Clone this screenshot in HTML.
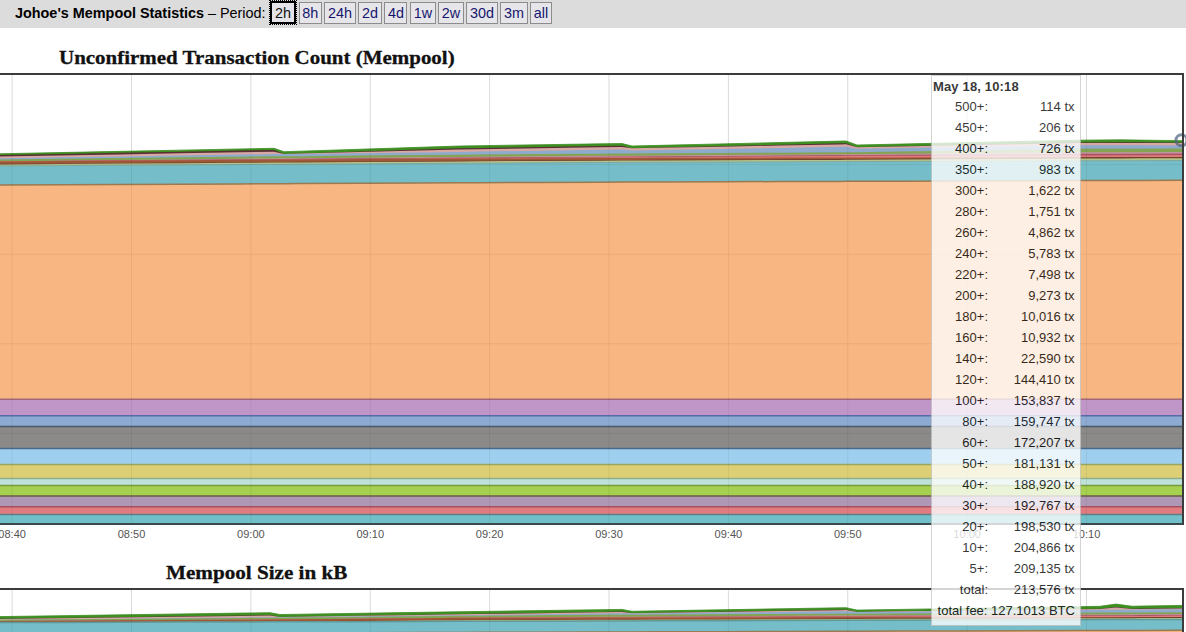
<!DOCTYPE html>
<html><head><meta charset="utf-8">
<style>
html,body{margin:0;padding:0;width:1186px;height:632px;overflow:hidden;background:#fff;}
body{position:relative;font-family:"Liberation Sans",sans-serif;}
#hdr{position:absolute;left:0;top:0;width:1186px;height:27.5px;background:#dcdcdc;}
#hdrtxt{position:absolute;left:15px;top:5px;font-size:14.4px;line-height:17px;color:#000;white-space:pre;}
#hdrtxt b{font-weight:bold;}
.b{position:absolute;top:2px;height:21.6px;box-sizing:border-box;border:1px solid #8c8c8c;background:#e6e6ea;color:#16166e;font-size:14.4px;line-height:20.6px;text-align:center;}
.b.sel{top:0.9px;height:23.2px;border:2px solid #000;outline:1.3px dotted #000;color:#111;line-height:20.6px;background:#e4e4e8;}
.title{position:absolute;font-family:"Liberation Serif",serif;font-weight:bold;color:#111;-webkit-text-stroke:0.3px #111;white-space:nowrap;transform-origin:0 0;}
svg{position:absolute;left:0;top:0;}
.xl{position:absolute;top:528px;width:40px;text-align:center;font-size:11px;line-height:13px;color:#545454;}
#tip{position:absolute;left:931px;top:75px;width:150px;height:550.5px;box-sizing:border-box;background:#fff;border:1px solid #c8c8c8;opacity:0.78;color:#000;font-size:13px;}
#tip .h{position:absolute;left:1px;top:3.3px;letter-spacing:0.15px;font-weight:bold;line-height:15px;white-space:nowrap;}
.tr{position:absolute;left:0;width:148px;height:15px;line-height:15px;white-space:nowrap;}
.tr .l{position:absolute;right:92px;}
.tr .v{position:absolute;right:5.5px;}
#fee{position:absolute;left:5.6px;letter-spacing:0px;top:526.8px;line-height:15px;white-space:nowrap;}
</style></head><body>
<div id="hdr"></div>
<div id="hdrtxt"><b>Johoe's Mempool Statistics</b> – Period: </div>
<div class="b sel" style="left:270px;width:26px">2h</div>
<div class="b" style="left:298.6px;width:23.2px">8h</div>
<div class="b" style="left:324.2px;width:31.6px">24h</div>
<div class="b" style="left:358.2px;width:23.4px">2d</div>
<div class="b" style="left:384.3px;width:23.2px">4d</div>
<div class="b" style="left:410.1px;width:25.7px">1w</div>
<div class="b" style="left:438.2px;width:25.6px">2w</div>
<div class="b" style="left:466.1px;width:31.7px">30d</div>
<div class="b" style="left:500.1px;width:27.7px">3m</div>
<div class="b" style="left:530.2px;width:21.6px">all</div>
<div class="title" id="t1" style="left:58.5px;top:46.6px;font-size:19px;line-height:22px;transform:scaleX(1.103);">Unconfirmed Transaction Count (Mempool)</div>
<div class="title" id="t2" style="left:165.5px;top:561.8px;font-size:19px;line-height:22px;transform:scaleX(1.112);">Mempool Size in kB</div>
<svg width="1186" height="632" viewBox="0 0 1186 632">
<defs><clipPath id="cp1"><rect x="-10" y="75" width="1192" height="448"/></clipPath>
<clipPath id="cp2"><rect x="-10" y="590" width="1192" height="60"/></clipPath></defs>
<g clip-path="url(#cp1)">
<polygon points="-4,153.8 0,153.78 60,152.57 120,151.37 180,150.17 240,148.96 274,148.28 284,151.72 300,151.2 360,149.25 420,147.3 460,146 480,145.68 540,144.74 600,143.85 622,143.55 632,146.02 660,145.36 720,143.94 780,142.53 840,141.11 846,140.97 857,145.03 900,144.09 960,142.78 1020,141.47 1080,140.16 1120,139.82 1140,140.1 1182,140.7 1182,530 1140,530 1120,530 1080,530 1020,530 960,530 900,530 857,530 846,530 840,530 780,530 720,530 660,530 632,530 622,530 600,530 540,530 480,530 460,530 420,530 360,530 300,530 284,530 274,530 240,530 180,530 120,530 60,530 0,530 -4,530" fill="#3e8e22"/>
<polygon points="-4,155.1 0,155.08 60,153.94 120,152.8 180,151.66 240,150.53 274,149.88 284,153.92 300,153.4 360,151.45 420,149.5 460,148.2 480,147.88 540,146.94 600,146.05 622,145.75 632,148.22 660,147.56 720,146.14 780,144.73 840,143.31 846,143.17 857,147.23 900,146.33 960,145.07 1020,143.81 1080,142.56 1120,142.22 1140,142.37 1182,142.7 1182,530 1140,530 1120,530 1080,530 1020,530 960,530 900,530 857,530 846,530 840,530 780,530 720,530 660,530 632,530 622,530 600,530 540,530 480,530 460,530 420,530 360,530 300,530 284,530 274,530 240,530 180,530 120,530 60,530 0,530 -4,530" fill="#5a3034"/>
<polygon points="-4,156.6 0,156.58 60,155.5 120,154.43 180,153.36 240,152.29 274,151.68 284,153.92 300,153.52 360,152.01 420,150.5 460,149.5 480,149.17 540,148.19 600,147.26 622,146.95 632,148.22 660,147.72 720,146.64 780,145.56 840,144.48 846,144.37 857,147.23 900,146.43 960,145.3 1020,144.18 1080,143.06 1120,142.92 1140,142.98 1182,143.1 1182,530 1140,530 1120,530 1080,530 1020,530 960,530 900,530 857,530 846,530 840,530 780,530 720,530 660,530 632,530 622,530 600,530 540,530 480,530 460,530 420,530 360,530 300,530 284,530 274,530 240,530 180,530 120,530 60,530 0,530 -4,530" fill="#d8a8a4"/>
<polygon points="-4,158.2 0,158.18 60,157.28 120,156.38 180,155.49 240,154.59 274,154.08 284,154.12 300,153.92 360,153.16 420,152.4 460,151.9 480,151.58 540,150.64 600,149.75 622,149.45 632,150.42 660,149.94 720,148.92 780,147.9 840,146.87 846,146.77 857,148.63 900,148 960,147.12 1020,146.24 1080,145.36 1120,145.22 1140,145.28 1182,145.4 1182,530 1140,530 1120,530 1080,530 1020,530 960,530 900,530 857,530 846,530 840,530 780,530 720,530 660,530 632,530 622,530 600,530 540,530 480,530 460,530 420,530 360,530 300,530 284,530 274,530 240,530 180,530 120,530 60,530 0,530 -4,530" fill="#8eaacc"/>
<polygon points="-4,159.4 0,159.38 60,158.7 120,158.02 180,157.34 240,156.67 274,156.28 284,156.32 300,156.18 360,155.62 420,155.07 460,154.7 480,154.55 540,154.08 600,153.67 622,153.55 632,153.52 660,153.36 720,153.01 780,152.66 840,152.31 846,152.27 857,152.23 900,151.58 960,150.67 1020,149.76 1080,148.86 1120,148.72 1140,148.65 1182,148.5 1182,530 1140,530 1120,530 1080,530 1020,530 960,530 900,530 857,530 846,530 840,530 780,530 720,530 660,530 632,530 622,530 600,530 540,530 480,530 460,530 420,530 360,530 300,530 284,530 274,530 240,530 180,530 120,530 60,530 0,530 -4,530" fill="#84a452"/>
<polygon points="-4,161.4 0,161.38 60,160.72 120,160.06 180,159.41 240,158.75 274,158.38 284,158.32 300,158.19 360,157.71 420,157.22 460,156.9 480,156.75 540,156.28 600,155.87 622,155.75 632,155.72 660,155.53 720,155.12 780,154.72 840,154.31 846,154.27 857,154.23 900,153.87 960,153.37 1020,152.86 1080,152.36 1120,152.22 1140,152.15 1182,152 1182,530 1140,530 1120,530 1080,530 1020,530 960,530 900,530 857,530 846,530 840,530 780,530 720,530 660,530 632,530 622,530 600,530 540,530 480,530 460,530 420,530 360,530 300,530 284,530 274,530 240,530 180,530 120,530 60,530 0,530 -4,530" fill="#c494a4"/>
<polygon points="-4,161.4 0,161.38 60,160.85 120,160.33 180,159.8 240,159.28 274,158.98 284,158.92 300,158.8 360,158.35 420,157.9 460,157.6 480,157.46 540,157.03 600,156.66 622,156.55 632,156.52 660,156.33 720,155.92 780,155.52 840,155.11 846,155.07 857,155.03 900,154.81 960,154.49 1020,154.17 1080,153.86 1120,153.72 1140,153.65 1182,153.5 1182,530 1140,530 1120,530 1080,530 1020,530 960,530 900,530 857,530 846,530 840,530 780,530 720,530 660,530 632,530 622,530 600,530 540,530 480,530 460,530 420,530 360,530 300,530 284,530 274,530 240,530 180,530 120,530 60,530 0,530 -4,530" fill="#a85464"/>
<polygon points="-4,161.4 0,161.38 60,160.98 120,160.59 180,160.2 240,159.8 274,159.58 284,159.52 300,159.41 360,158.99 420,158.58 460,158.3 480,158.17 540,157.78 600,157.44 622,157.35 632,157.32 660,157.13 720,156.72 780,156.32 840,155.91 846,155.87 857,155.83 900,155.76 960,155.66 1020,155.56 1080,155.46 1120,155.32 1140,155.25 1182,155.1 1182,530 1140,530 1120,530 1080,530 1020,530 960,530 900,530 857,530 846,530 840,530 780,530 720,530 660,530 632,530 622,530 600,530 540,530 480,530 460,530 420,530 360,530 300,530 284,530 274,530 240,530 180,530 120,530 60,530 0,530 -4,530" fill="#e07a78"/>
<polygon points="-4,161.4 0,161.38 60,160.98 120,160.59 180,160.2 240,159.8 274,159.58 284,159.52 300,159.44 360,159.12 420,158.81 460,158.6 480,158.51 540,158.23 600,158 622,157.95 632,157.92 660,157.86 720,157.73 780,157.61 840,157.48 846,157.47 857,157.43 900,157.4 960,157.35 1020,157.3 1080,157.26 1120,157.12 1140,157.05 1182,156.9 1182,530 1140,530 1120,530 1080,530 1020,530 960,530 900,530 857,530 846,530 840,530 780,530 720,530 660,530 632,530 622,530 600,530 540,530 480,530 460,530 420,530 360,530 300,530 284,530 274,530 240,530 180,530 120,530 60,530 0,530 -4,530" fill="#9e5838"/>
<polygon points="-4,163.8 0,163.78 60,163.38 120,162.99 180,162.6 240,162.2 274,161.98 284,161.92 300,161.82 360,161.44 420,161.05 460,160.8 480,160.68 540,160.33 600,160.03 622,159.95 632,159.92 660,159.81 720,159.57 780,159.33 840,159.1 846,159.07 857,159.03 900,158.69 960,158.21 1020,157.73 1080,157.26 1120,157.12 1140,157.05 1182,156.9 1182,530 1140,530 1120,530 1080,530 1020,530 960,530 900,530 857,530 846,530 840,530 780,530 720,530 660,530 632,530 622,530 600,530 540,530 480,530 460,530 420,530 360,530 300,530 284,530 274,530 240,530 180,530 120,530 60,530 0,530 -4,530" fill="#704030"/>
<polygon points="-4,164.4 0,164.38 60,163.98 120,163.59 180,163.2 240,162.8 274,162.58 284,162.52 300,162.42 360,162.04 420,161.65 460,161.4 480,161.28 540,160.93 600,160.63 622,160.55 632,160.52 660,160.43 720,160.25 780,160.07 840,159.89 846,159.87 857,159.83 900,159.59 960,159.24 1020,158.9 1080,158.56 1120,158.42 1140,158.35 1182,158.2 1182,530 1140,530 1120,530 1080,530 1020,530 960,530 900,530 857,530 846,530 840,530 780,530 720,530 660,530 632,530 622,530 600,530 540,530 480,530 460,530 420,530 360,530 300,530 284,530 274,530 240,530 180,530 120,530 60,530 0,530 -4,530" fill="#b4c488"/>
<polygon points="-4,166 0,165.98 60,165.63 120,165.28 180,164.93 240,164.58 274,164.38 284,164.32 300,164.23 360,163.88 420,163.53 460,163.3 480,163.18 540,162.83 600,162.53 622,162.45 632,162.42 660,162.32 720,162.11 780,161.9 840,161.69 846,161.67 857,161.63 900,161.48 960,161.27 1020,161.07 1080,160.86 1120,160.72 1140,160.65 1182,160.5 1182,530 1140,530 1120,530 1080,530 1020,530 960,530 900,530 857,530 846,530 840,530 780,530 720,530 660,530 632,530 622,530 600,530 540,530 480,530 460,530 420,530 360,530 300,530 284,530 274,530 240,530 180,530 120,530 60,530 0,530 -4,530" fill="#74bdc9"/>
<polygon points="-4,185.1 0,185.08 60,184.78 120,184.48 180,184.19 240,183.89 274,183.72 284,183.67 300,183.59 360,183.29 420,182.99 460,182.8 480,182.7 540,182.4 600,182.14 622,182.07 632,182.04 660,181.95 720,181.76 780,181.57 840,181.38 846,181.36 857,181.33 900,181.19 960,181 1020,180.81 1080,180.62 1120,180.5 1140,180.43 1182,180.3 1182,530 1140,530 1120,530 1080,530 1020,530 960,530 900,530 857,530 846,530 840,530 780,530 720,530 660,530 632,530 622,530 600,530 540,530 480,530 460,530 420,530 360,530 300,530 284,530 274,530 240,530 180,530 120,530 60,530 0,530 -4,530" fill="#f8b682"/>
<polygon points="-4,399.3 0,399.3 60,399.3 120,399.3 180,399.3 240,399.3 274,399.3 284,399.3 300,399.3 360,399.3 420,399.3 460,399.3 480,399.3 540,399.3 600,399.3 622,399.3 632,399.3 660,399.3 720,399.3 780,399.3 840,399.3 846,399.3 857,399.3 900,399.3 960,399.3 1020,399.3 1080,399.3 1120,399.3 1140,399.3 1182,399.3 1182,530 1140,530 1120,530 1080,530 1020,530 960,530 900,530 857,530 846,530 840,530 780,530 720,530 660,530 632,530 622,530 600,530 540,530 480,530 460,530 420,530 360,530 300,530 284,530 274,530 240,530 180,530 120,530 60,530 0,530 -4,530" fill="#c096c8"/>
<polygon points="-4,415.8 0,415.8 60,415.8 120,415.8 180,415.8 240,415.8 274,415.8 284,415.8 300,415.8 360,415.8 420,415.8 460,415.8 480,415.8 540,415.8 600,415.8 622,415.8 632,415.8 660,415.8 720,415.8 780,415.8 840,415.8 846,415.8 857,415.8 900,415.8 960,415.8 1020,415.8 1080,415.8 1120,415.8 1140,415.8 1182,415.8 1182,530 1140,530 1120,530 1080,530 1020,530 960,530 900,530 857,530 846,530 840,530 780,530 720,530 660,530 632,530 622,530 600,530 540,530 480,530 460,530 420,530 360,530 300,530 284,530 274,530 240,530 180,530 120,530 60,530 0,530 -4,530" fill="#8caad2"/>
<polygon points="-4,426.6 0,426.6 60,426.6 120,426.6 180,426.6 240,426.6 274,426.6 284,426.6 300,426.6 360,426.6 420,426.6 460,426.6 480,426.6 540,426.6 600,426.6 622,426.6 632,426.6 660,426.6 720,426.6 780,426.6 840,426.6 846,426.6 857,426.6 900,426.6 960,426.6 1020,426.6 1080,426.6 1120,426.6 1140,426.6 1182,426.6 1182,530 1140,530 1120,530 1080,530 1020,530 960,530 900,530 857,530 846,530 840,530 780,530 720,530 660,530 632,530 622,530 600,530 540,530 480,530 460,530 420,530 360,530 300,530 284,530 274,530 240,530 180,530 120,530 60,530 0,530 -4,530" fill="#8b8a89"/>
<polygon points="-4,448.6 0,448.6 60,448.6 120,448.6 180,448.6 240,448.6 274,448.6 284,448.6 300,448.6 360,448.6 420,448.6 460,448.6 480,448.6 540,448.6 600,448.6 622,448.6 632,448.6 660,448.6 720,448.6 780,448.6 840,448.6 846,448.6 857,448.6 900,448.6 960,448.6 1020,448.6 1080,448.6 1120,448.6 1140,448.6 1182,448.6 1182,530 1140,530 1120,530 1080,530 1020,530 960,530 900,530 857,530 846,530 840,530 780,530 720,530 660,530 632,530 622,530 600,530 540,530 480,530 460,530 420,530 360,530 300,530 284,530 274,530 240,530 180,530 120,530 60,530 0,530 -4,530" fill="#9ecfee"/>
<polygon points="-4,464.4 0,464.4 60,464.4 120,464.4 180,464.4 240,464.4 274,464.4 284,464.4 300,464.4 360,464.4 420,464.4 460,464.4 480,464.4 540,464.4 600,464.4 622,464.4 632,464.4 660,464.4 720,464.4 780,464.4 840,464.4 846,464.4 857,464.4 900,464.4 960,464.4 1020,464.4 1080,464.4 1120,464.4 1140,464.4 1182,464.4 1182,530 1140,530 1120,530 1080,530 1020,530 960,530 900,530 857,530 846,530 840,530 780,530 720,530 660,530 632,530 622,530 600,530 540,530 480,530 460,530 420,530 360,530 300,530 284,530 274,530 240,530 180,530 120,530 60,530 0,530 -4,530" fill="#dccf76"/>
<polygon points="-4,478.5 0,478.5 60,478.5 120,478.5 180,478.5 240,478.5 274,478.5 284,478.5 300,478.5 360,478.5 420,478.5 460,478.5 480,478.5 540,478.5 600,478.5 622,478.5 632,478.5 660,478.5 720,478.5 780,478.5 840,478.5 846,478.5 857,478.5 900,478.5 960,478.5 1020,478.5 1080,478.5 1120,478.5 1140,478.5 1182,478.5 1182,530 1140,530 1120,530 1080,530 1020,530 960,530 900,530 857,530 846,530 840,530 780,530 720,530 660,530 632,530 622,530 600,530 540,530 480,530 460,530 420,530 360,530 300,530 284,530 274,530 240,530 180,530 120,530 60,530 0,530 -4,530" fill="#bee2da"/>
<polygon points="-4,485.6 0,485.6 60,485.6 120,485.6 180,485.6 240,485.6 274,485.6 284,485.6 300,485.6 360,485.6 420,485.6 460,485.6 480,485.6 540,485.6 600,485.6 622,485.6 632,485.6 660,485.6 720,485.6 780,485.6 840,485.6 846,485.6 857,485.6 900,485.6 960,485.6 1020,485.6 1080,485.6 1120,485.6 1140,485.6 1182,485.6 1182,530 1140,530 1120,530 1080,530 1020,530 960,530 900,530 857,530 846,530 840,530 780,530 720,530 660,530 632,530 622,530 600,530 540,530 480,530 460,530 420,530 360,530 300,530 284,530 274,530 240,530 180,530 120,530 60,530 0,530 -4,530" fill="#a6d050"/>
<polygon points="-4,495.9 0,495.9 60,495.9 120,495.9 180,495.9 240,495.9 274,495.9 284,495.9 300,495.9 360,495.9 420,495.9 460,495.9 480,495.9 540,495.9 600,495.9 622,495.9 632,495.9 660,495.9 720,495.9 780,495.9 840,495.9 846,495.9 857,495.9 900,495.9 960,495.9 1020,495.9 1080,495.9 1120,495.9 1140,495.9 1182,495.9 1182,530 1140,530 1120,530 1080,530 1020,530 960,530 900,530 857,530 846,530 840,530 780,530 720,530 660,530 632,530 622,530 600,530 540,530 480,530 460,530 420,530 360,530 300,530 284,530 274,530 240,530 180,530 120,530 60,530 0,530 -4,530" fill="#ae98b6"/>
<polygon points="-4,506.8 0,506.8 60,506.8 120,506.8 180,506.8 240,506.8 274,506.8 284,506.8 300,506.8 360,506.8 420,506.8 460,506.8 480,506.8 540,506.8 600,506.8 622,506.8 632,506.8 660,506.8 720,506.8 780,506.8 840,506.8 846,506.8 857,506.8 900,506.8 960,506.8 1020,506.8 1080,506.8 1120,506.8 1140,506.8 1182,506.8 1182,530 1140,530 1120,530 1080,530 1020,530 960,530 900,530 857,530 846,530 840,530 780,530 720,530 660,530 632,530 622,530 600,530 540,530 480,530 460,530 420,530 360,530 300,530 284,530 274,530 240,530 180,530 120,530 60,530 0,530 -4,530" fill="#e07c80"/>
<polygon points="-4,514.6 0,514.6 60,514.6 120,514.6 180,514.6 240,514.6 274,514.6 284,514.6 300,514.6 360,514.6 420,514.6 460,514.6 480,514.6 540,514.6 600,514.6 622,514.6 632,514.6 660,514.6 720,514.6 780,514.6 840,514.6 846,514.6 857,514.6 900,514.6 960,514.6 1020,514.6 1080,514.6 1120,514.6 1140,514.6 1182,514.6 1182,530 1140,530 1120,530 1080,530 1020,530 960,530 900,530 857,530 846,530 840,530 780,530 720,530 660,530 632,530 622,530 600,530 540,530 480,530 460,530 420,530 360,530 300,530 284,530 274,530 240,530 180,530 120,530 60,530 0,530 -4,530" fill="#70bfc9"/>
<polyline points="-4,514.6 0,514.6 60,514.6 120,514.6 180,514.6 240,514.6 274,514.6 284,514.6 300,514.6 360,514.6 420,514.6 460,514.6 480,514.6 540,514.6 600,514.6 622,514.6 632,514.6 660,514.6 720,514.6 780,514.6 840,514.6 846,514.6 857,514.6 900,514.6 960,514.6 1020,514.6 1080,514.6 1120,514.6 1140,514.6 1182,514.6" fill="none" stroke="#5e7f88" stroke-width="1.5"/>
<polyline points="-4,506.8 0,506.8 60,506.8 120,506.8 180,506.8 240,506.8 274,506.8 284,506.8 300,506.8 360,506.8 420,506.8 460,506.8 480,506.8 540,506.8 600,506.8 622,506.8 632,506.8 660,506.8 720,506.8 780,506.8 840,506.8 846,506.8 857,506.8 900,506.8 960,506.8 1020,506.8 1080,506.8 1120,506.8 1140,506.8 1182,506.8" fill="none" stroke="#a65060" stroke-width="1.5"/>
<polyline points="-4,495.9 0,495.9 60,495.9 120,495.9 180,495.9 240,495.9 274,495.9 284,495.9 300,495.9 360,495.9 420,495.9 460,495.9 480,495.9 540,495.9 600,495.9 622,495.9 632,495.9 660,495.9 720,495.9 780,495.9 840,495.9 846,495.9 857,495.9 900,495.9 960,495.9 1020,495.9 1080,495.9 1120,495.9 1140,495.9 1182,495.9" fill="none" stroke="#6a5a48" stroke-width="1.5"/>
<polyline points="-4,485.6 0,485.6 60,485.6 120,485.6 180,485.6 240,485.6 274,485.6 284,485.6 300,485.6 360,485.6 420,485.6 460,485.6 480,485.6 540,485.6 600,485.6 622,485.6 632,485.6 660,485.6 720,485.6 780,485.6 840,485.6 846,485.6 857,485.6 900,485.6 960,485.6 1020,485.6 1080,485.6 1120,485.6 1140,485.6 1182,485.6" fill="none" stroke="#7a9a40" stroke-width="1.5"/>
<polyline points="-4,478.5 0,478.5 60,478.5 120,478.5 180,478.5 240,478.5 274,478.5 284,478.5 300,478.5 360,478.5 420,478.5 460,478.5 480,478.5 540,478.5 600,478.5 622,478.5 632,478.5 660,478.5 720,478.5 780,478.5 840,478.5 846,478.5 857,478.5 900,478.5 960,478.5 1020,478.5 1080,478.5 1120,478.5 1140,478.5 1182,478.5" fill="none" stroke="#8eae8a" stroke-width="1.5"/>
<polyline points="-4,464.4 0,464.4 60,464.4 120,464.4 180,464.4 240,464.4 274,464.4 284,464.4 300,464.4 360,464.4 420,464.4 460,464.4 480,464.4 540,464.4 600,464.4 622,464.4 632,464.4 660,464.4 720,464.4 780,464.4 840,464.4 846,464.4 857,464.4 900,464.4 960,464.4 1020,464.4 1080,464.4 1120,464.4 1140,464.4 1182,464.4" fill="none" stroke="#9aa660" stroke-width="1.5"/>
<polyline points="-4,448.6 0,448.6 60,448.6 120,448.6 180,448.6 240,448.6 274,448.6 284,448.6 300,448.6 360,448.6 420,448.6 460,448.6 480,448.6 540,448.6 600,448.6 622,448.6 632,448.6 660,448.6 720,448.6 780,448.6 840,448.6 846,448.6 857,448.6 900,448.6 960,448.6 1020,448.6 1080,448.6 1120,448.6 1140,448.6 1182,448.6" fill="none" stroke="#4a6a8a" stroke-width="1.5"/>
<polyline points="-4,426.6 0,426.6 60,426.6 120,426.6 180,426.6 240,426.6 274,426.6 284,426.6 300,426.6 360,426.6 420,426.6 460,426.6 480,426.6 540,426.6 600,426.6 622,426.6 632,426.6 660,426.6 720,426.6 780,426.6 840,426.6 846,426.6 857,426.6 900,426.6 960,426.6 1020,426.6 1080,426.6 1120,426.6 1140,426.6 1182,426.6" fill="none" stroke="#4a5a6a" stroke-width="1.5"/>
<polyline points="-4,415.8 0,415.8 60,415.8 120,415.8 180,415.8 240,415.8 274,415.8 284,415.8 300,415.8 360,415.8 420,415.8 460,415.8 480,415.8 540,415.8 600,415.8 622,415.8 632,415.8 660,415.8 720,415.8 780,415.8 840,415.8 846,415.8 857,415.8 900,415.8 960,415.8 1020,415.8 1080,415.8 1120,415.8 1140,415.8 1182,415.8" fill="none" stroke="#5a6aa8" stroke-width="1.5"/>
<polyline points="-4,399.3 0,399.3 60,399.3 120,399.3 180,399.3 240,399.3 274,399.3 284,399.3 300,399.3 360,399.3 420,399.3 460,399.3 480,399.3 540,399.3 600,399.3 622,399.3 632,399.3 660,399.3 720,399.3 780,399.3 840,399.3 846,399.3 857,399.3 900,399.3 960,399.3 1020,399.3 1080,399.3 1120,399.3 1140,399.3 1182,399.3" fill="none" stroke="#a06878" stroke-width="1.5"/>
<polyline points="-4,185.1 0,185.08 60,184.78 120,184.48 180,184.19 240,183.89 274,183.72 284,183.67 300,183.59 360,183.29 420,182.99 460,182.8 480,182.7 540,182.4 600,182.14 622,182.07 632,182.04 660,181.95 720,181.76 780,181.57 840,181.38 846,181.36 857,181.33 900,181.19 960,181 1020,180.81 1080,180.62 1120,180.5 1140,180.43 1182,180.3" fill="none" stroke="#9a7a50" stroke-width="1.5"/>
<polyline points="-4,166 0,165.98 60,165.63 120,165.28 180,164.93 240,164.58 274,164.38 284,164.32 300,164.23 360,163.88 420,163.53 460,163.3 480,163.18 540,162.83 600,162.53 622,162.45 632,162.42 660,162.32 720,162.11 780,161.9 840,161.69 846,161.67 857,161.63 900,161.48 960,161.27 1020,161.07 1080,160.86 1120,160.72 1140,160.65 1182,160.5" fill="none" stroke="#80a8a0" stroke-width="1.0"/>
<polyline points="-4,153.8 0,153.78 60,152.57 120,151.37 180,150.17 240,148.96 274,148.28 284,151.72 300,151.2 360,149.25 420,147.3 460,146 480,145.68 540,144.74 600,143.85 622,143.55 632,146.02 660,145.36 720,143.94 780,142.53 840,141.11 846,140.97 857,145.03 900,144.09 960,142.78 1020,141.47 1080,140.16 1120,139.82 1140,140.1 1182,140.7" fill="none" stroke="#3e8e22" stroke-width="0.8"/>
<line x1="12.12" y1="75" x2="12.12" y2="153.53" stroke="rgba(0,0,0,0.15)" stroke-width="1"/>
<line x1="12.12" y1="153.53" x2="12.12" y2="523" stroke="rgba(0,0,0,0.06)" stroke-width="1"/>
<line x1="131.5" y1="75" x2="131.5" y2="151.14" stroke="rgba(0,0,0,0.15)" stroke-width="1"/>
<line x1="131.5" y1="151.14" x2="131.5" y2="523" stroke="rgba(0,0,0,0.06)" stroke-width="1"/>
<line x1="250.88" y1="75" x2="250.88" y2="148.75" stroke="rgba(0,0,0,0.15)" stroke-width="1"/>
<line x1="250.88" y1="148.75" x2="250.88" y2="523" stroke="rgba(0,0,0,0.06)" stroke-width="1"/>
<line x1="370.25" y1="75" x2="370.25" y2="148.92" stroke="rgba(0,0,0,0.15)" stroke-width="1"/>
<line x1="370.25" y1="148.92" x2="370.25" y2="523" stroke="rgba(0,0,0,0.06)" stroke-width="1"/>
<line x1="489.62" y1="75" x2="489.62" y2="145.53" stroke="rgba(0,0,0,0.15)" stroke-width="1"/>
<line x1="489.62" y1="145.53" x2="489.62" y2="523" stroke="rgba(0,0,0,0.06)" stroke-width="1"/>
<line x1="609" y1="75" x2="609" y2="143.73" stroke="rgba(0,0,0,0.15)" stroke-width="1"/>
<line x1="609" y1="143.73" x2="609" y2="523" stroke="rgba(0,0,0,0.06)" stroke-width="1"/>
<line x1="728.38" y1="75" x2="728.38" y2="143.75" stroke="rgba(0,0,0,0.15)" stroke-width="1"/>
<line x1="728.38" y1="143.75" x2="728.38" y2="523" stroke="rgba(0,0,0,0.06)" stroke-width="1"/>
<line x1="847.75" y1="75" x2="847.75" y2="141.62" stroke="rgba(0,0,0,0.15)" stroke-width="1"/>
<line x1="847.75" y1="141.62" x2="847.75" y2="523" stroke="rgba(0,0,0,0.06)" stroke-width="1"/>
<line x1="967.12" y1="75" x2="967.12" y2="142.62" stroke="rgba(0,0,0,0.15)" stroke-width="1"/>
<line x1="967.12" y1="142.62" x2="967.12" y2="523" stroke="rgba(0,0,0,0.06)" stroke-width="1"/>
<line x1="1086.5" y1="75" x2="1086.5" y2="140.1" stroke="rgba(0,0,0,0.15)" stroke-width="1"/>
<line x1="1086.5" y1="140.1" x2="1086.5" y2="523" stroke="rgba(0,0,0,0.06)" stroke-width="1"/>
<line x1="-10" y1="164.6" x2="1182" y2="164.6" stroke="rgba(0,0,0,0.06)" stroke-width="1"/>
<line x1="-10" y1="254.2" x2="1182" y2="254.2" stroke="rgba(0,0,0,0.06)" stroke-width="1"/>
<line x1="-10" y1="343.8" x2="1182" y2="343.8" stroke="rgba(0,0,0,0.06)" stroke-width="1"/>
<line x1="-10" y1="433.4" x2="1182" y2="433.4" stroke="rgba(0,0,0,0.06)" stroke-width="1"/>
</g>
<circle cx="1181.5" cy="140.3" r="5.5" fill="none" stroke="rgba(80,100,130,0.72)" stroke-width="3"/>
<rect x="-10" y="74" width="1193" height="450" fill="none" stroke="#3c3c3c" stroke-width="2"/>
<line x1="-10" y1="524" x2="1183" y2="524" stroke="#3a4a4a" stroke-width="2"/>
<g clip-path="url(#cp2)">
<polygon points="-4,616.6 0,616.6 60,615.73 120,614.85 180,613.98 240,613.11 270,612.67 280,614.54 300,614.23 360,613.3 420,612.37 460,611.75 480,611.47 540,610.6 600,609.73 622,609.42 632,611.29 660,610.82 720,609.82 780,608.81 840,607.81 846,607.71 857,610.08 900,609.41 960,608.49 1020,607.56 1080,606.63 1100,606.32 1116,604.08 1132,606.24 1140,606.1 1182,605.4 1182,640 1140,640 1132,640 1116,640 1100,640 1080,640 1020,640 960,640 900,640 857,640 846,640 840,640 780,640 720,640 660,640 632,640 622,640 600,640 540,640 480,640 460,640 420,640 360,640 300,640 280,640 270,640 240,640 180,640 120,640 60,640 0,640 -4,640" fill="#3e8e22"/>
<polygon points="-4,618.8 0,618.8 60,617.97 120,617.14 180,616.31 240,615.48 270,615.07 280,616.94 300,616.63 360,615.7 420,614.77 460,614.15 480,613.84 540,612.9 600,611.96 622,611.62 632,613.29 660,612.82 720,611.82 780,610.81 840,609.81 846,609.71 857,611.88 900,611.32 960,610.54 1020,609.76 1080,608.98 1100,608.72 1116,606.88 1132,608.64 1140,608.58 1182,608.3 1182,640 1140,640 1132,640 1116,640 1100,640 1080,640 1020,640 960,640 900,640 857,640 846,640 840,640 780,640 720,640 660,640 632,640 622,640 600,640 540,640 480,640 460,640 420,640 360,640 300,640 280,640 270,640 240,640 180,640 120,640 60,640 0,640 -4,640" fill="#5a3034"/>
<polygon points="-4,619 0,619 60,618.24 120,617.48 180,616.71 240,615.95 270,615.57 280,616.94 300,616.65 360,615.79 420,614.93 460,614.35 480,614.07 540,613.2 600,612.33 622,612.02 632,613.29 660,612.87 720,611.98 780,611.09 840,610.2 846,610.11 857,611.88 900,611.37 960,610.67 1020,609.96 1080,609.26 1100,609.02 1116,607.48 1132,608.94 1140,608.88 1182,608.6 1182,640 1140,640 1132,640 1116,640 1100,640 1080,640 1020,640 960,640 900,640 857,640 846,640 840,640 780,640 720,640 660,640 632,640 622,640 600,640 540,640 480,640 460,640 420,640 360,640 300,640 280,640 270,640 240,640 180,640 120,640 60,640 0,640 -4,640" fill="#d8a8a4"/>
<polygon points="-4,619.8 0,619.8 60,619.22 120,618.63 180,618.05 240,617.46 270,617.17 280,617.14 300,616.94 360,616.35 420,615.75 460,615.35 480,615.09 540,614.3 600,613.51 622,613.22 632,613.49 660,613.2 720,612.59 780,611.98 840,611.37 846,611.31 857,612.08 900,611.66 960,611.08 1020,610.5 1080,609.92 1100,609.72 1116,609.68 1132,609.64 1140,609.58 1182,609.3 1182,640 1140,640 1132,640 1116,640 1100,640 1080,640 1020,640 960,640 900,640 857,640 846,640 840,640 780,640 720,640 660,640 632,640 622,640 600,640 540,640 480,640 460,640 420,640 360,640 300,640 280,640 270,640 240,640 180,640 120,640 60,640 0,640 -4,640" fill="#8eaacc"/>
<polygon points="-4,619.8 0,619.8 60,619.35 120,618.9 180,618.45 240,617.99 270,617.77 280,617.74 300,617.53 360,616.9 420,616.27 460,615.85 480,615.71 540,615.29 600,614.87 622,614.72 632,614.69 660,614.56 720,614.29 780,614.01 840,613.74 846,613.71 857,613.68 900,613.49 960,613.23 1020,612.97 1080,612.71 1100,612.62 1116,612.58 1132,612.54 1140,612.48 1182,612.2 1182,640 1140,640 1132,640 1116,640 1100,640 1080,640 1020,640 960,640 900,640 857,640 846,640 840,640 780,640 720,640 660,640 632,640 622,640 600,640 540,640 480,640 460,640 420,640 360,640 300,640 280,640 270,640 240,640 180,640 120,640 60,640 0,640 -4,640" fill="#84a452"/>
<polygon points="-4,621 0,621 60,620.68 120,620.36 180,620.05 240,619.73 270,619.57 280,619.54 300,619.35 360,618.79 420,618.23 460,617.85 480,617.71 540,617.29 600,616.87 622,616.72 632,616.69 660,616.53 720,616.2 780,615.87 840,615.54 846,615.51 857,615.48 900,615.29 960,615.03 1020,614.77 1080,614.51 1100,614.42 1116,614.38 1132,614.34 1140,614.28 1182,614 1182,640 1140,640 1132,640 1116,640 1100,640 1080,640 1020,640 960,640 900,640 857,640 846,640 840,640 780,640 720,640 660,640 632,640 622,640 600,640 540,640 480,640 460,640 420,640 360,640 300,640 280,640 270,640 240,640 180,640 120,640 60,640 0,640 -4,640" fill="#c494a4"/>
<polygon points="-4,621 0,621 60,620.68 120,620.36 180,620.05 240,619.73 270,619.57 280,619.54 300,619.35 360,618.79 420,618.23 460,617.85 480,617.75 540,617.44 600,617.13 622,617.02 632,616.99 660,616.86 720,616.59 780,616.31 840,616.04 846,616.01 857,615.98 900,615.85 960,615.66 1020,615.47 1080,615.28 1100,615.22 1116,615.18 1132,615.14 1140,615.08 1182,614.8 1182,640 1140,640 1132,640 1116,640 1100,640 1080,640 1020,640 960,640 900,640 857,640 846,640 840,640 780,640 720,640 660,640 632,640 622,640 600,640 540,640 480,640 460,640 420,640 360,640 300,640 280,640 270,640 240,640 180,640 120,640 60,640 0,640 -4,640" fill="#a85464"/>
<polygon points="-4,621 0,621 60,620.68 120,620.36 180,620.05 240,619.73 270,619.57 280,619.54 300,619.35 360,618.79 420,618.23 460,617.85 480,617.79 540,617.59 600,617.39 622,617.32 632,617.29 660,617.19 720,616.97 780,616.75 840,616.53 846,616.51 857,616.48 900,616.4 960,616.29 1020,616.17 1080,616.06 1100,616.02 1116,615.98 1132,615.94 1140,615.88 1182,615.6 1182,640 1140,640 1132,640 1116,640 1100,640 1080,640 1020,640 960,640 900,640 857,640 846,640 840,640 780,640 720,640 660,640 632,640 622,640 600,640 540,640 480,640 460,640 420,640 360,640 300,640 280,640 270,640 240,640 180,640 120,640 60,640 0,640 -4,640" fill="#e07a78"/>
<polygon points="-4,621 0,621 60,620.68 120,620.36 180,620.05 240,619.73 270,619.57 280,619.54 300,619.35 360,618.79 420,618.23 460,617.85 480,617.81 540,617.69 600,617.56 622,617.52 632,617.49 660,617.44 720,617.33 780,617.23 840,617.12 846,617.11 857,617.08 900,617.11 960,617.14 1020,617.18 1080,617.21 1100,617.22 1116,617.18 1132,617.14 1140,617.11 1182,617 1182,640 1140,640 1132,640 1116,640 1100,640 1080,640 1020,640 960,640 900,640 857,640 846,640 840,640 780,640 720,640 660,640 632,640 622,640 600,640 540,640 480,640 460,640 420,640 360,640 300,640 280,640 270,640 240,640 180,640 120,640 60,640 0,640 -4,640" fill="#9e5838"/>
<polygon points="-4,622.4 0,622.4 60,622.17 120,621.94 180,621.71 240,621.48 270,621.37 280,621.34 300,621.18 360,620.68 420,620.19 460,619.85 480,619.79 540,619.59 600,619.39 622,619.32 632,619.29 660,619.19 720,618.97 780,618.75 840,618.53 846,618.51 857,618.48 900,618.29 960,618.03 1020,617.77 1080,617.51 1100,617.42 1116,617.38 1132,617.34 1140,617.28 1182,617 1182,640 1140,640 1132,640 1116,640 1100,640 1080,640 1020,640 960,640 900,640 857,640 846,640 840,640 780,640 720,640 660,640 632,640 622,640 600,640 540,640 480,640 460,640 420,640 360,640 300,640 280,640 270,640 240,640 180,640 120,640 60,640 0,640 -4,640" fill="#704030"/>
<polygon points="-4,622.4 0,622.4 60,622.22 120,622.03 180,621.85 240,621.66 270,621.57 280,621.54 300,621.39 360,620.93 420,620.46 460,620.15 480,620.1 540,619.94 600,619.78 622,619.72 632,619.69 660,619.6 720,619.41 780,619.22 840,619.03 846,619.01 857,618.98 900,618.85 960,618.66 1020,618.47 1080,618.28 1100,618.22 1116,618.18 1132,618.14 1140,618.11 1182,618 1182,640 1140,640 1132,640 1116,640 1100,640 1080,640 1020,640 960,640 900,640 857,640 846,640 840,640 780,640 720,640 660,640 632,640 622,640 600,640 540,640 480,640 460,640 420,640 360,640 300,640 280,640 270,640 240,640 180,640 120,640 60,640 0,640 -4,640" fill="#b4c488"/>
<polygon points="-4,622.6 0,622.6 60,622.44 120,622.28 180,622.11 240,621.95 270,621.87 280,621.84 300,621.79 360,621.63 420,621.46 460,621.35 480,621.3 540,621.14 600,620.98 622,620.92 632,620.89 660,620.81 720,620.65 780,620.49 840,620.33 846,620.31 857,620.28 900,620.16 960,620 1020,619.84 1080,619.68 1100,619.62 1116,619.58 1132,619.54 1140,619.51 1182,619.4 1182,640 1140,640 1132,640 1116,640 1100,640 1080,640 1020,640 960,640 900,640 857,640 846,640 840,640 780,640 720,640 660,640 632,640 622,640 600,640 540,640 480,640 460,640 420,640 360,640 300,640 280,640 270,640 240,640 180,640 120,640 60,640 0,640 -4,640" fill="#74bdc9"/>
<polygon points="-4,633.8 0,633.79 60,633.61 120,633.43 180,633.25 240,633.07 270,632.98 280,632.95 300,632.89 360,632.72 420,632.54 460,632.42 480,632.36 540,632.18 600,632 622,631.94 632,631.91 660,631.82 720,631.65 780,631.47 840,631.3 846,631.28 857,631.25 900,631.12 960,630.95 1020,630.77 1080,630.6 1100,630.54 1116,630.49 1132,630.45 1140,630.42 1182,630.3 1182,640 1140,640 1132,640 1116,640 1100,640 1080,640 1020,640 960,640 900,640 857,640 846,640 840,640 780,640 720,640 660,640 632,640 622,640 600,640 540,640 480,640 460,640 420,640 360,640 300,640 280,640 270,640 240,640 180,640 120,640 60,640 0,640 -4,640" fill="#f8b682"/>
<polyline points="-4,633.8 0,633.79 60,633.61 120,633.43 180,633.25 240,633.07 270,632.98 280,632.95 300,632.89 360,632.72 420,632.54 460,632.42 480,632.36 540,632.18 600,632 622,631.94 632,631.91 660,631.82 720,631.65 780,631.47 840,631.3 846,631.28 857,631.25 900,631.12 960,630.95 1020,630.77 1080,630.6 1100,630.54 1116,630.49 1132,630.45 1140,630.42 1182,630.3" fill="none" stroke="#9a7a50" stroke-width="1.5"/>
<polyline points="-4,622.6 0,622.6 60,622.44 120,622.28 180,622.11 240,621.95 270,621.87 280,621.84 300,621.79 360,621.63 420,621.46 460,621.35 480,621.3 540,621.14 600,620.98 622,620.92 632,620.89 660,620.81 720,620.65 780,620.49 840,620.33 846,620.31 857,620.28 900,620.16 960,620 1020,619.84 1080,619.68 1100,619.62 1116,619.58 1132,619.54 1140,619.51 1182,619.4" fill="none" stroke="#609a98" stroke-width="1.5"/>
<polyline points="-4,616.6 0,616.6 60,615.73 120,614.85 180,613.98 240,613.11 270,612.67 280,614.54 300,614.23 360,613.3 420,612.37 460,611.75 480,611.47 540,610.6 600,609.73 622,609.42 632,611.29 660,610.82 720,609.82 780,608.81 840,607.81 846,607.71 857,610.08 900,609.41 960,608.49 1020,607.56 1080,606.63 1100,606.32 1116,604.08 1132,606.24 1140,606.1 1182,605.4" fill="none" stroke="#3e8e22" stroke-width="0.8"/>
<line x1="12.12" y1="590" x2="12.12" y2="616.42" stroke="rgba(0,0,0,0.15)" stroke-width="1"/>
<line x1="12.12" y1="616.42" x2="12.12" y2="632" stroke="rgba(0,0,0,0.06)" stroke-width="1"/>
<line x1="131.5" y1="590" x2="131.5" y2="614.69" stroke="rgba(0,0,0,0.15)" stroke-width="1"/>
<line x1="131.5" y1="614.69" x2="131.5" y2="632" stroke="rgba(0,0,0,0.06)" stroke-width="1"/>
<line x1="250.88" y1="590" x2="250.88" y2="612.95" stroke="rgba(0,0,0,0.15)" stroke-width="1"/>
<line x1="250.88" y1="612.95" x2="250.88" y2="632" stroke="rgba(0,0,0,0.06)" stroke-width="1"/>
<line x1="370.25" y1="590" x2="370.25" y2="613.14" stroke="rgba(0,0,0,0.15)" stroke-width="1"/>
<line x1="370.25" y1="613.14" x2="370.25" y2="632" stroke="rgba(0,0,0,0.06)" stroke-width="1"/>
<line x1="489.62" y1="590" x2="489.62" y2="611.33" stroke="rgba(0,0,0,0.15)" stroke-width="1"/>
<line x1="489.62" y1="611.33" x2="489.62" y2="632" stroke="rgba(0,0,0,0.06)" stroke-width="1"/>
<line x1="609" y1="590" x2="609" y2="609.6" stroke="rgba(0,0,0,0.15)" stroke-width="1"/>
<line x1="609" y1="609.6" x2="609" y2="632" stroke="rgba(0,0,0,0.06)" stroke-width="1"/>
<line x1="728.38" y1="590" x2="728.38" y2="609.68" stroke="rgba(0,0,0,0.15)" stroke-width="1"/>
<line x1="728.38" y1="609.68" x2="728.38" y2="632" stroke="rgba(0,0,0,0.06)" stroke-width="1"/>
<line x1="847.75" y1="590" x2="847.75" y2="608.09" stroke="rgba(0,0,0,0.15)" stroke-width="1"/>
<line x1="847.75" y1="608.09" x2="847.75" y2="632" stroke="rgba(0,0,0,0.06)" stroke-width="1"/>
<line x1="967.12" y1="590" x2="967.12" y2="608.38" stroke="rgba(0,0,0,0.15)" stroke-width="1"/>
<line x1="967.12" y1="608.38" x2="967.12" y2="632" stroke="rgba(0,0,0,0.06)" stroke-width="1"/>
<line x1="1086.5" y1="590" x2="1086.5" y2="606.53" stroke="rgba(0,0,0,0.15)" stroke-width="1"/>
<line x1="1086.5" y1="606.53" x2="1086.5" y2="632" stroke="rgba(0,0,0,0.06)" stroke-width="1"/>
</g>
<rect x="-10" y="589" width="1193" height="100" fill="none" stroke="#3c3c3c" stroke-width="2"/>

</svg>
<div class="xl" style="left:-7.88px">08:40</div>
<div class="xl" style="left:111.5px">08:50</div>
<div class="xl" style="left:230.88px">09:00</div>
<div class="xl" style="left:350.25px">09:10</div>
<div class="xl" style="left:469.62px">09:20</div>
<div class="xl" style="left:589px">09:30</div>
<div class="xl" style="left:708.38px">09:40</div>
<div class="xl" style="left:827.75px">09:50</div>
<div class="xl" style="left:947.12px">10:00</div>
<div class="xl" style="left:1066.5px">10:10</div>
<div id="tip">
<div class="h">May 18, 10:18</div>
<div class="tr" style="top:22.8px"><span class="l">500+:</span><span class="v">114 tx</span></div>
<div class="tr" style="top:43.8px"><span class="l">450+:</span><span class="v">206 tx</span></div>
<div class="tr" style="top:64.8px"><span class="l">400+:</span><span class="v">726 tx</span></div>
<div class="tr" style="top:85.8px"><span class="l">350+:</span><span class="v">983 tx</span></div>
<div class="tr" style="top:106.8px"><span class="l">300+:</span><span class="v">1,622 tx</span></div>
<div class="tr" style="top:127.8px"><span class="l">280+:</span><span class="v">1,751 tx</span></div>
<div class="tr" style="top:148.8px"><span class="l">260+:</span><span class="v">4,862 tx</span></div>
<div class="tr" style="top:169.8px"><span class="l">240+:</span><span class="v">5,783 tx</span></div>
<div class="tr" style="top:190.8px"><span class="l">220+:</span><span class="v">7,498 tx</span></div>
<div class="tr" style="top:211.8px"><span class="l">200+:</span><span class="v">9,273 tx</span></div>
<div class="tr" style="top:232.8px"><span class="l">180+:</span><span class="v">10,016 tx</span></div>
<div class="tr" style="top:253.8px"><span class="l">160+:</span><span class="v">10,932 tx</span></div>
<div class="tr" style="top:274.8px"><span class="l">140+:</span><span class="v">22,590 tx</span></div>
<div class="tr" style="top:295.8px"><span class="l">120+:</span><span class="v">144,410 tx</span></div>
<div class="tr" style="top:316.8px"><span class="l">100+:</span><span class="v">153,837 tx</span></div>
<div class="tr" style="top:337.8px"><span class="l">80+:</span><span class="v">159,747 tx</span></div>
<div class="tr" style="top:358.8px"><span class="l">60+:</span><span class="v">172,207 tx</span></div>
<div class="tr" style="top:379.8px"><span class="l">50+:</span><span class="v">181,131 tx</span></div>
<div class="tr" style="top:400.8px"><span class="l">40+:</span><span class="v">188,920 tx</span></div>
<div class="tr" style="top:421.8px"><span class="l">30+:</span><span class="v">192,767 tx</span></div>
<div class="tr" style="top:442.8px"><span class="l">20+:</span><span class="v">198,530 tx</span></div>
<div class="tr" style="top:463.8px"><span class="l">10+:</span><span class="v">204,866 tx</span></div>
<div class="tr" style="top:484.8px"><span class="l">5+:</span><span class="v">209,135 tx</span></div>
<div class="tr" style="top:505.8px"><span class="l">total:</span><span class="v">213,576 tx</span></div>
<div id="fee">total fee: 127.1013 BTC</div>
</div>
</body></html>
